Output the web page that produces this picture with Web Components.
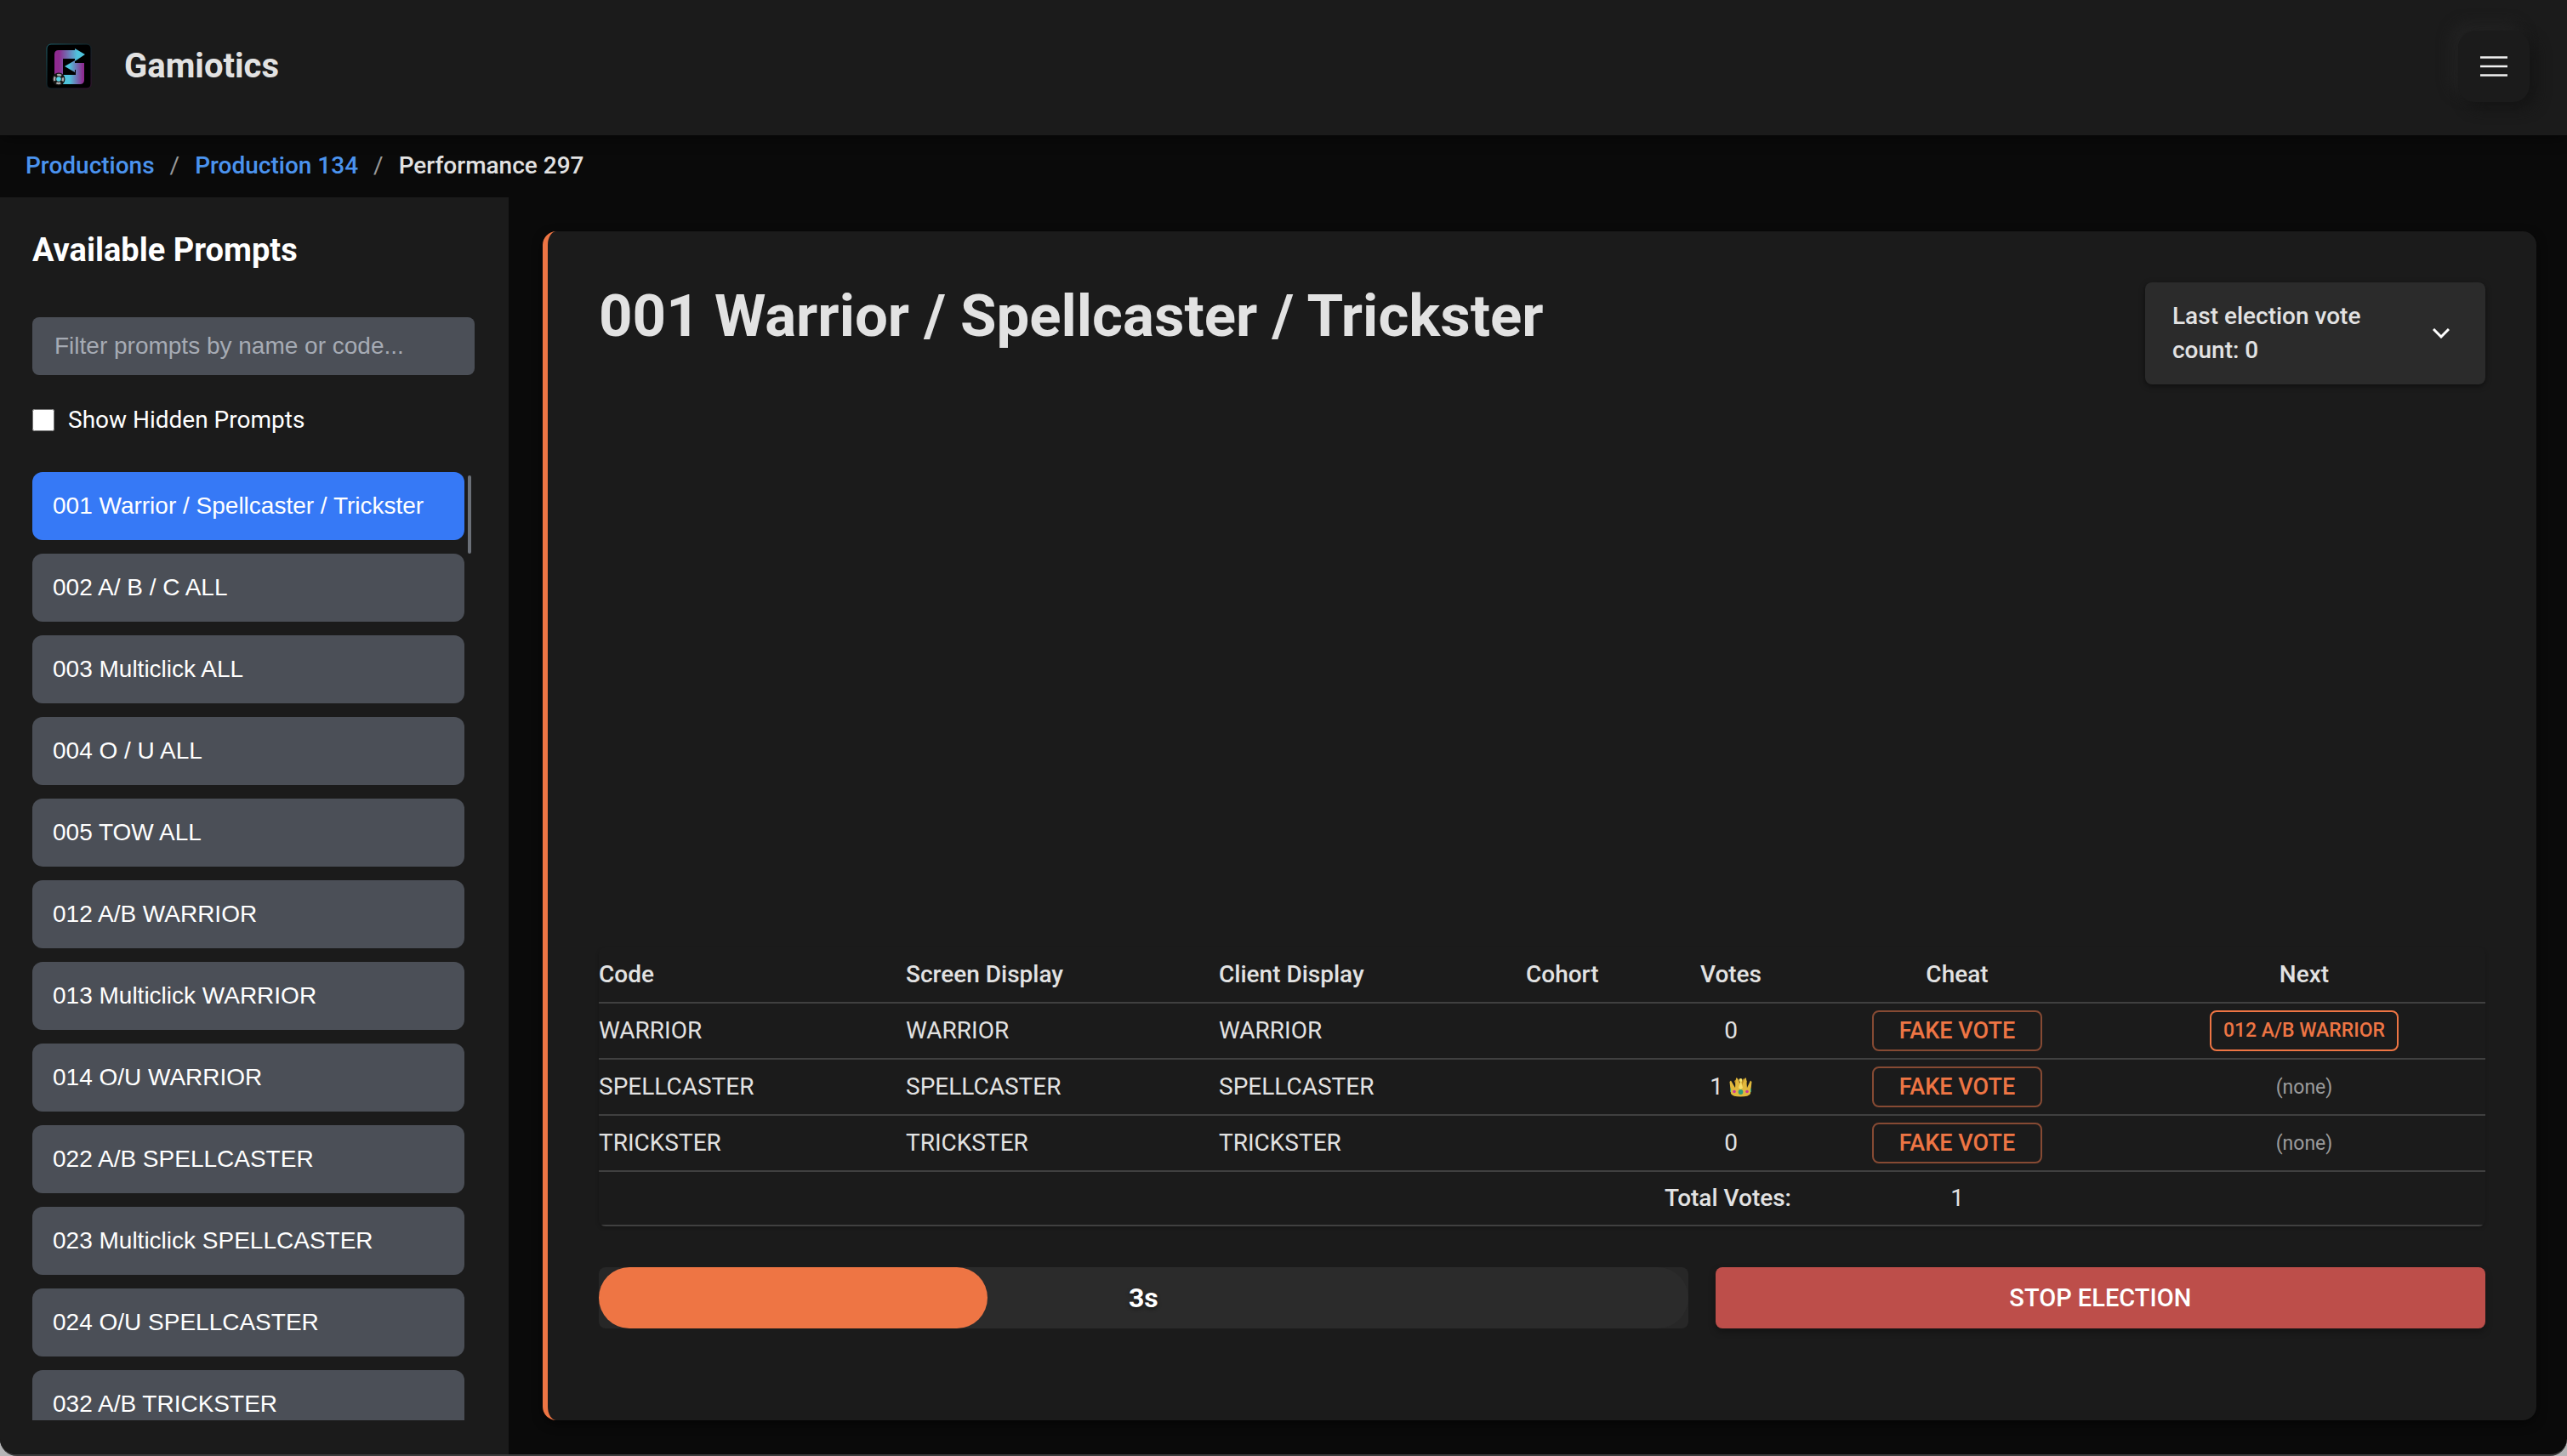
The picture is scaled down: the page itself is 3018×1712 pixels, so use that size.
<!DOCTYPE html>
<html lang="en">
<head>
<meta charset="utf-8">
<title>Gamiotics</title>
<style>
  html, body { height: 100%; margin: 0; }
  body { background: #b4b4b6; font-family: Roboto, sans-serif; font-size: 28px; color: #e2e2e2; overflow: hidden; }
</style>
</head>
<body>
<app-shell>
  <app-header slot="header" brand="Gamiotics"></app-header>
  <bread-crumbs slot="crumbs">
    <a href="#productions">Productions</a>
    <a href="#production-134">Production 134</a>
    <span>Performance 297</span>
  </bread-crumbs>
  <prompt-sidebar slot="side">
    <prompt-item active>001 Warrior / Spellcaster / Trickster</prompt-item>
    <prompt-item>002 A/ B / C ALL</prompt-item>
    <prompt-item>003 Multiclick ALL</prompt-item>
    <prompt-item>004 O / U ALL</prompt-item>
    <prompt-item>005 TOW ALL</prompt-item>
    <prompt-item>012 A/B WARRIOR</prompt-item>
    <prompt-item>013 Multiclick WARRIOR</prompt-item>
    <prompt-item>014 O/U WARRIOR</prompt-item>
    <prompt-item>022 A/B SPELLCASTER</prompt-item>
    <prompt-item>023 Multiclick SPELLCASTER</prompt-item>
    <prompt-item>024 O/U SPELLCASTER</prompt-item>
    <prompt-item>032 A/B TRICKSTER</prompt-item>
  </prompt-sidebar>
  <election-card>
    <span slot="title">001 Warrior / Spellcaster / Trickster</span>
    <last-count slot="summary">Last election vote count: 0</last-count>
    <vote-table></vote-table>
    <timer-bar slot="actions">3s</timer-bar>
    <stop-button slot="actions">STOP ELECTION</stop-button>
  </election-card>
</app-shell>

<script>
const define = (name, html, setup) => {
  const template = document.createElement('template');
  template.innerHTML = html;
  customElements.define(name, class extends HTMLElement {
    connectedCallback() {
      if (this.shadowRoot) return;
      this.attachShadow({ mode: 'open' }).append(template.content.cloneNode(true));
      if (setup) setup(this, this.shadowRoot);
    }
  });
};

define('app-shell', `
  <style>
    :host { display: flex; flex-direction: column; height: 100vh; box-sizing: border-box; overflow: hidden;
      background: #0a0a0a; border-bottom: 2px solid #3b3a3b; border-radius: 0 0 20px 20px; }
    .body { flex: 1; min-height: 0; display: flex; }
    main { flex: 1; min-width: 0; display: flex; padding: 40px 36px 40px 40px; }
    main ::slotted(*) { flex: 1; min-width: 0; }
  </style>
  <slot name="header"></slot>
  <slot name="crumbs"></slot>
  <div class="body"><slot name="side"></slot><main><slot></slot></main></div>`);

define('app-header', `
  <style>
    :host { display: flex; align-items: center; height: 156px; padding-bottom: 3px; padding-left: 54px; padding-right: 44px;
      background: #1b1b1b; box-shadow: 0 4px 16px rgba(0,0,0,.4); }
    svg { display: block; }
    .logo { width: 54px; height: 54px; margin-right: 38px; }
    .brand { flex: 1; font-size: 40px; line-height: 48px; font-weight: 700; }
    button { width: 84px; height: 84px; padding: 0; border: 0; border-radius: 20px; background: #1b1b1b; color: #f0f0f0;
      display: grid; place-items: center; box-shadow: 8px 8px 16px #151515, -8px -8px 16px #232323; }
  </style>
  <svg class="logo" viewBox="0 0 54 54" aria-hidden="true">
    <defs>
      <linearGradient id="a" x1="0" x2="1"><stop offset=".15" stop-color="#8f2a8f"/><stop offset=".75" stop-color="#4fc3dc"/></linearGradient>
      <linearGradient id="b" x1="0" x2="1"><stop offset=".3" stop-color="#4fc3dc"/><stop offset=".95" stop-color="#8f2a8f"/></linearGradient>
      <linearGradient id="e" x1="0" x2="1" y1="0" y2="1"><stop offset="0" stop-color="#1d6470"/><stop offset=".5" stop-color="#11262c"/><stop offset="1" stop-color="#3a1236"/></linearGradient>
    </defs>
    <rect x="1" y="1" width="52" height="52" rx="5" fill="#000" stroke="url(#e)"/>
    <path fill="url(#a)" d="M10 38V13q0-5 5-5h19V6l12 7-12 8v-3H20v20z"/>
    <path fill="url(#b)" d="M22 27l12-7v3h11v20q0 5-5 5H20V37h15V31h-1v3z"/>
    <circle cx="15" cy="42" r="7.500" fill="#151515"/>
    <circle cx="15" cy="42" r="5" fill="none" stroke="#a8a8a8" stroke-width="2.500" stroke-dasharray="5 2.854" stroke-dashoffset="2.500"/>
    <circle cx="15" cy="42" r="2.800" fill="#59d6ea"/>
  </svg>
  <span class="brand"></span>
  <button type="button" aria-label="Menu">
    <svg width="32" height="24" viewBox="0 0 32 24"><path d="M0 1.500h32M0 12h32M0 22.500h32" stroke="currentColor" stroke-width="2.500"/></svg>
  </button>`, (el, root) => { root.querySelector('.brand').textContent = el.getAttribute('brand'); });

define('bread-crumbs', `
  <style>
    :host { display: block; height: 73px; padding-left: 30px; font-weight: 500; }
    nav { display: flex; align-items: center; gap: 18px; height: 70px; }
    nav a { color: #4b93ee; text-decoration: none; }
    i { font-style: normal; font-weight: 400; color: #9a9a9a; }
  </style>
  <nav aria-label="Breadcrumb"></nav>`, (el, root) => {
    const nav = root.querySelector('nav');
    [...el.children].forEach((node, n) => {
      if (n) { const sep = document.createElement('i'); sep.textContent = '/'; nav.append(sep); }
      nav.append(node.cloneNode(true));
    });
    el.replaceChildren();
  });

define('prompt-item', `
  <style>
    :host { display: block; }
    button { display: block; width: 100%; height: 80px; padding: 0 24px; border: 0; border-radius: 12px; text-align: left;
      background: #4b4f57; color: #fff; font: 28px/80px "Liberation Sans", Arial, sans-serif; white-space: nowrap; }
    :host([active]) button { background: #3679f6; }
  </style>
  <button type="button"><slot></slot></button>`);

define('prompt-sidebar', `
  <style>
    :host { display: flex; flex-direction: column; box-sizing: border-box; width: 598px; padding: 40px 40px 40px 38px; background: #1b1b1b; color: #fff; }
    h2 { margin: 0; font-size: 38px; line-height: 44px; font-weight: 700; }
    input[type=text] { box-sizing: border-box; width: 100%; height: 68px; margin: 57px 0 0; padding: 0 26px; border: 0; border-radius: 8px;
      background: #4b4f57; color: #fff; font: 28px "Liberation Sans", Arial, sans-serif; }
    input::placeholder { color: #a6abb4; opacity: 1; }
    label { display: flex; align-items: center; gap: 16px; margin: 36px 0 44px; line-height: 34px; }
    input[type=checkbox] { width: 26px; height: 26px; margin: 0; }
    .scroll { flex: 1; min-height: 0; display: flex; gap: 4px; padding-right: 4px; overflow: hidden; }
    .list { flex: 1; display: flex; flex-direction: column; gap: 16px; }
    .thumb { width: 4px; height: 92px; margin-top: 4px; border-radius: 2px; background: #6b7078; }
  </style>
  <h2>Available Prompts</h2>
  <input type="text" aria-label="Filter prompts" placeholder="Filter prompts by name or code...">
  <label for="hidden"><input id="hidden" type="checkbox">Show Hidden Prompts</label>
  <div class="scroll"><div class="list"><slot></slot></div><div class="thumb"></div></div>`);

define('election-card', `
  <style>
    :host { display: flex; flex-direction: column; box-sizing: border-box; padding: 60px; border-left: 6px solid #ee7544;
      border-radius: 16px; background: #1b1b1b; box-shadow: 0 4px 12px rgba(0,0,0,.5); }
    header { flex: 1; display: flex; justify-content: space-between; align-items: flex-start; }
    h1 { margin: 0; font-size: 69px; line-height: 80px; font-weight: 700; }
    footer { display: flex; gap: 32px; padding: 48px 0; }
  </style>
  <header><h1><slot name="title"></slot></h1><slot name="summary"></slot></header>
  <slot></slot>
  <footer><slot name="actions"></slot></footer>`);

define('last-count', `
  <style>
    :host { display: block; width: 400px; }
    button { display: flex; align-items: center; justify-content: space-between; box-sizing: border-box; width: 100%; padding: 20px 42px 20px 32px;
      border: 0; border-radius: 8px; background: #2b2b2b; color: #e2e2e2; font: 500 28px/40px Roboto, sans-serif; text-align: left;
      box-shadow: 0 2px 6px rgba(0,0,0,.5); }
    span { width: 240px; }
  </style>
  <button type="button" aria-expanded="false"><span><slot></slot></span>
    <svg width="20" height="12" viewBox="0 0 20 12" fill="none" stroke="#fff" stroke-width="3"><path d="M1 1l9 9 9-9"/></svg>
  </button>`);

define('outline-button', `
  <style>
    :host { display: inline-block; vertical-align: top; }
    button { display: block; height: 48px; padding: 0 30px; border: 2px solid #864a33; border-radius: 8px; background: none; color: #ee7544;
      font: 500 27px/44px Roboto, sans-serif; }
    :host([small]) button { padding: 0 14px; border-color: #ee7544; font-size: 23px; }
  </style>
  <button type="button"><slot></slot></button>`);

define('vote-table', `
  <style>
    :host { display: block; border-radius: 8px; overflow: hidden; box-shadow: 0 2px 4px rgba(0,0,0,.2); }
    table { width: 100%; table-layout: fixed; border-collapse: separate; border-spacing: 0; }
    th, td { box-sizing: border-box; height: 66px; padding: 0; border-bottom: 2px solid #404040; text-align: center; font-weight: 400; line-height: 40px; }
    th { font-weight: 500; }
    thead th:nth-child(-n+4), tbody td:nth-child(-n+3) { text-align: left; }
    tfoot th, tfoot td { height: 64px; }
    tfoot th { text-align: right; }
    svg { vertical-align: -3px; }
    small { font-size: 23px; color: #9c9c9c; }
  </style>
  <table>
    <colgroup><col style="width:361px"><col style="width:368px"><col style="width:361px"><col style="width:170px"><col style="width:142px"><col style="width:390px"><col style="width:426px"></colgroup>
    <thead><tr><th>Code</th><th>Screen Display</th><th>Client Display</th><th>Cohort</th><th>Votes</th><th>Cheat</th><th>Next</th></tr></thead>
    <tbody></tbody>
    <tfoot><tr><th colspan="5">Total Votes:</th><td>1</td><td></td></tr></tfoot>
  </table>`, (el, root) => {
    const crown = ` <svg width="27" height="24" viewBox="0 0 27 24" role="img" aria-label="Leader">
      <path fill="#b98a24" d="M6 5l3 9h9l3-9-4-3-3.500 6L10 2z"/>
      <path fill="#e0b83c" d="M2 20L.5 6 2 4.500 7 13 8 2l1-1 4 9V3.500h2V10l4-9 1 1 1 11 4-8.500L26.500 6 25 20q-2 3.500-11.500 3.500T2 20z"/>
      <path fill="#f6df6a" d="M11 13l2.500-8 2.500 8-2.500 2z"/>
      <circle cx="13.500" cy="4" r="2" fill="#f8e46c"/>
      <ellipse cx="13.500" cy="18" rx="2.800" ry="3" fill="#2e9c7c"/>
      <circle cx="6" cy="17.500" r="1.800" fill="#c8379c"/><circle cx="21" cy="17.500" r="1.800" fill="#c8379c"/>
      <path fill="#2e9c7c" d="M1 13q2 2 1 5l-1 0zM26 13q-2 2-1 5l1 0z"/></svg>`;
    const rows = [['WARRIOR', '0', '012 A/B WARRIOR'], ['SPELLCASTER', '1' + crown, ''], ['TRICKSTER', '0', '']];
    root.querySelector('tbody').innerHTML = rows.map(([name, votes, next]) => `
      <tr><td>${name}</td><td>${name}</td><td>${name}</td><td></td><td>${votes}</td>
      <td><outline-button>FAKE VOTE</outline-button></td>
      <td>${next ? `<outline-button small>${next}</outline-button>` : '<small>(none)</small>'}</td></tr>`).join('');
  });

define('timer-bar', `
  <style>
    :host { display: block; flex: 1280 1 0; height: 72px; border-radius: 8px; background: #272727; overflow: hidden; }
    .track { display: grid; height: 100%; border-radius: 36px; background: #2b2b2b; align-items: center; }
    .fill { grid-area: 1 / 1; width: 35.7%; height: 100%; border-radius: 36px; background: #ee7544; }
    .text { grid-area: 1 / 1; text-align: center; font-size: 32px; font-weight: 700; color: #fff; text-shadow: 0 2px 4px rgba(0,0,0,.5); }
  </style>
  <div class="track"><div class="fill"></div><div class="text"><slot></slot></div></div>`);

define('stop-button', `
  <style>
    :host { display: block; flex: 905 1 0; }
    button { width: 100%; height: 72px; border: 0; border-radius: 8px; background: #bd4e4a; color: #fff; font: 500 29px Roboto, sans-serif;
      box-shadow: 0 4px 8px rgba(0,0,0,.3); }
  </style>
  <button type="button"><slot></slot></button>`);
</script>
</body>
</html>
